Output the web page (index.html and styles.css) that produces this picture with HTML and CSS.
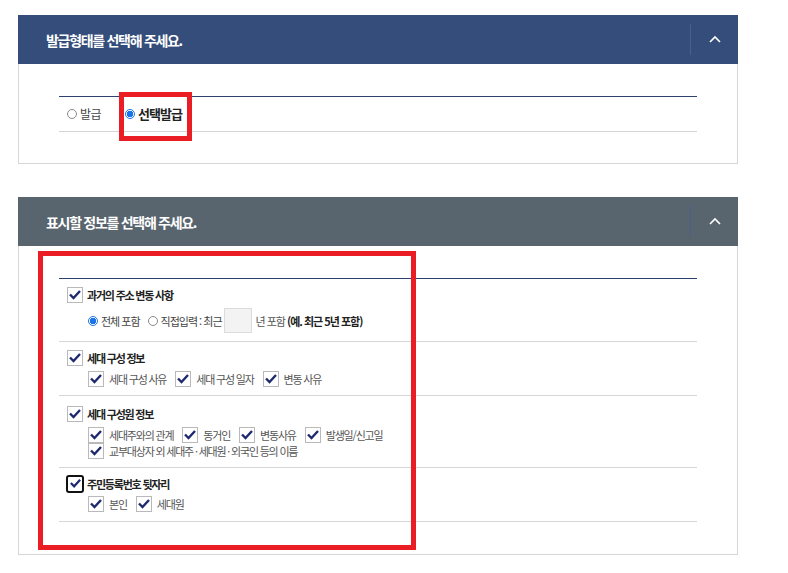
FILE: index.html
```html
<!DOCTYPE html>
<html lang="ko">
<head>
    <meta charset="UTF-8">
    <title>발급형태 선택</title>
    <link rel="stylesheet" href="styles.css">
</head>
<body>

    <div class="panel">
        <div class="panel-head navy">
            <h2>발급형태를 선택해 주세요.</h2>
            <button class="toggle"><svg width="12" height="8" viewBox="0 0 12 8"><polyline points="1,7 6,2 11,7" fill="none" stroke="#fff" stroke-width="1.6"/></svg></button>
        </div>
        <div class="panel-body short">
            <div class="issue-row">
                <label class="radio"><span class="dot"></span>발급</label>
                <label class="radio on strong"><span class="dot"></span>선택발급</label>
            </div>
        </div>
    </div>

    <div class="panel">
        <div class="panel-head slate">
            <h2>표시할 정보를 선택해 주세요.</h2>
            <button class="toggle"><svg width="12" height="8" viewBox="0 0 12 8"><polyline points="1,7 6,2 11,7" fill="none" stroke="#fff" stroke-width="1.6"/></svg></button>
        </div>
        <div class="panel-body">
            <div class="option-list">

                <div class="option first">
                    <label class="check main"><span class="box"><svg viewBox="0 0 14 14"><polyline points="2,6.5 5.5,10 12,3"/></svg></span>과거의 주소 변동 사항</label>
                    <div class="sub period">
                        <label class="radio on"><span class="dot"></span>전체 포함</label>
                        <label class="radio"><span class="dot"></span>직접입력 : 최근</label>
                        <input class="years" type="text">
                        <span class="note">년 포함 <b>(예. 최근 5년 포함)</b></span>
                    </div>
                </div>

                <div class="option">
                    <label class="check main"><span class="box"><svg viewBox="0 0 14 14"><polyline points="2,6.5 5.5,10 12,3"/></svg></span>세대 구성 정보</label>
                    <div class="sub">
                        <label class="check"><span class="box"><svg viewBox="0 0 14 14"><polyline points="2,6.5 5.5,10 12,3"/></svg></span>세대 구성 사유</label>
                        <label class="check"><span class="box"><svg viewBox="0 0 14 14"><polyline points="2,6.5 5.5,10 12,3"/></svg></span>세대 구성 일자</label>
                        <label class="check"><span class="box"><svg viewBox="0 0 14 14"><polyline points="2,6.5 5.5,10 12,3"/></svg></span>변동 사유</label>
                    </div>
                </div>

                <div class="option tall">
                    <label class="check main"><span class="box"><svg viewBox="0 0 14 14"><polyline points="2,6.5 5.5,10 12,3"/></svg></span>세대 구성원 정보</label>
                    <div class="sub">
                        <label class="check"><span class="box"><svg viewBox="0 0 14 14"><polyline points="2,6.5 5.5,10 12,3"/></svg></span>세대주와의 관계</label>
                        <label class="check"><span class="box"><svg viewBox="0 0 14 14"><polyline points="2,6.5 5.5,10 12,3"/></svg></span>동거인</label>
                        <label class="check"><span class="box"><svg viewBox="0 0 14 14"><polyline points="2,6.5 5.5,10 12,3"/></svg></span>변동사유</label>
                        <label class="check"><span class="box"><svg viewBox="0 0 14 14"><polyline points="2,6.5 5.5,10 12,3"/></svg></span>발생일/신고일</label>
                    </div>
                    <div class="sub tight">
                        <label class="check"><span class="box"><svg viewBox="0 0 14 14"><polyline points="2,6.5 5.5,10 12,3"/></svg></span>교부대상자 외 세대주 · 세대원 · 외국인 등의 이름</label>
                    </div>
                </div>

                <div class="option last">
                    <label class="check main focus"><span class="box"><svg viewBox="0 0 14 14"><polyline points="2,6.5 5.5,10 12,3"/></svg></span>주민등록번호 뒷자리</label>
                    <div class="sub">
                        <label class="check"><span class="box"><svg viewBox="0 0 14 14"><polyline points="2,6.5 5.5,10 12,3"/></svg></span>본인</label>
                        <label class="check"><span class="box"><svg viewBox="0 0 14 14"><polyline points="2,6.5 5.5,10 12,3"/></svg></span>세대원</label>
                    </div>
                </div>

            </div>
        </div>
    </div>

    <!-- annotation boxes -->
    <div class="mark mark-issue"></div>
    <div class="mark mark-info"></div>

</body>
</html>
```

FILE: styles.css
```css
* { box-sizing: border-box; margin: 0; padding: 0; }
body {
    background: #fff;
    font-family: "Noto Sans CJK KR", "Noto Sans", sans-serif;
    color: #333;
    padding: 15px 0 0 18px;
    position: relative;
}
.panel {
    width: 720px;
    margin-bottom: 33px;
}
.panel-head {
    height: 49px;
    display: flex;
    align-items: center;
    padding-left: 28px;
}
.panel-head.navy { background: #344d7a; }
.panel-head.slate { background: #59656e; }
.panel-head h2 {
    flex: 1;
    color: #fff;
    font-size: 14px;
    font-weight: bold;
    letter-spacing: -1.3px;
    line-height: 20px;
}
.toggle {
    width: 48px;
    height: 31px;
    border: none;
    border-left: 1px solid #4a5f8c;
    background: none;
    display: flex;
    align-items: center;
    justify-content: center;
    padding-bottom: 1px;
}
.panel-body {
    border: 1px solid #d6d6d6;
    border-top: none;
    padding: 32px 40px 32px 40px;
}
.panel-body.short { padding-bottom: 31px; }
.issue-row {
    border-top: 1px solid #2c4170;
    border-bottom: 1px solid #d4d4d4;
    height: 36px;
    display: flex;
    align-items: center;
    padding-left: 8px;
    gap: 24px;
}
.radio {
    display: flex;
    align-items: center;
    gap: 3px;
    font-size: 11px;
    letter-spacing: -1px;
    color: #444;
    line-height: 16px;
}
.issue-row .radio {
    font-size: 12px;
    letter-spacing: -0.6px;
}
.issue-row .radio.strong {
    font-weight: bold;
    color: #222;
    font-size: 13px;
    letter-spacing: -0.9px;
}
.dot {
    width: 10px;
    height: 10px;
    border: 1px solid #8a8a8a;
    border-radius: 50%;
    background: #fff;
    flex: none;
}
.radio.on .dot {
    border: 1px solid #1a73e8;
    background: radial-gradient(circle, #1a73e8 0 3px, #fff 3.4px);
}
.option-list {
    border-top: 1px solid #2c4170;
}
.option {
    border-bottom: 1px solid #d6d6d6;
    padding: 8px 0 8px 8px;
}
.option.tall { padding: 10px 0 8px 8px; }
.option.last { padding: 7px 0 9px 8px; }
.check {
    display: flex;
    align-items: center;
    gap: 5px;
    font-size: 11px;
    letter-spacing: -1.2px;
    color: #555;
    height: 16px;
}
.check.main {
    font-weight: bold;
    color: #222;
    gap: 4px;
}
.box {
    width: 16px;
    height: 16px;
    border: 1px solid #b9b9b9;
    background: #fff;
    flex: none;
    display: flex;
    align-items: center;
    justify-content: center;
}
.box svg {
    display: block;
    width: 14px;
    height: 14px;
    fill: none;
    stroke: #1f2a6e;
    stroke-width: 2.4;
}
.check.focus { height: 17px; }
.check.focus .box {
    width: 18px;
    height: 18px;
    margin-left: -1px;
    margin-right: -1px;
    border: 2px solid #111;
    border-radius: 3px;
}
.check.focus .box svg {
    width: 13px;
    height: 13px;
}
.sub {
    display: flex;
    align-items: center;
    gap: 9px;
    padding-left: 21px;
    margin-top: 5px;
}
.option.last .sub { margin-top: 4px; }
.sub.tight { margin-top: 0; }
.sub.period {
    gap: 0;
    height: 25px;
    margin-top: 5px;
}
.option.first { padding-bottom: 8px; }
.period .radio { margin-right: 8px; }
.period .radio + .radio { margin-right: 2px; }
.years {
    width: 28px;
    height: 25px;
    border: 1px solid #dcdcdc;
    background: #f3f3f3;
    margin-right: 4px;
}
.note {
    font-size: 11px;
    letter-spacing: -1px;
    color: #555;
}
.note b { color: #222; }

.mark {
    position: absolute;
    border: 5px solid #ea1c24;
}
.mark-issue {
    left: 119px;
    top: 92px;
    width: 73px;
    height: 49px;
}
.mark-info {
    left: 38px;
    top: 251px;
    width: 378px;
    height: 299px;
}
```
